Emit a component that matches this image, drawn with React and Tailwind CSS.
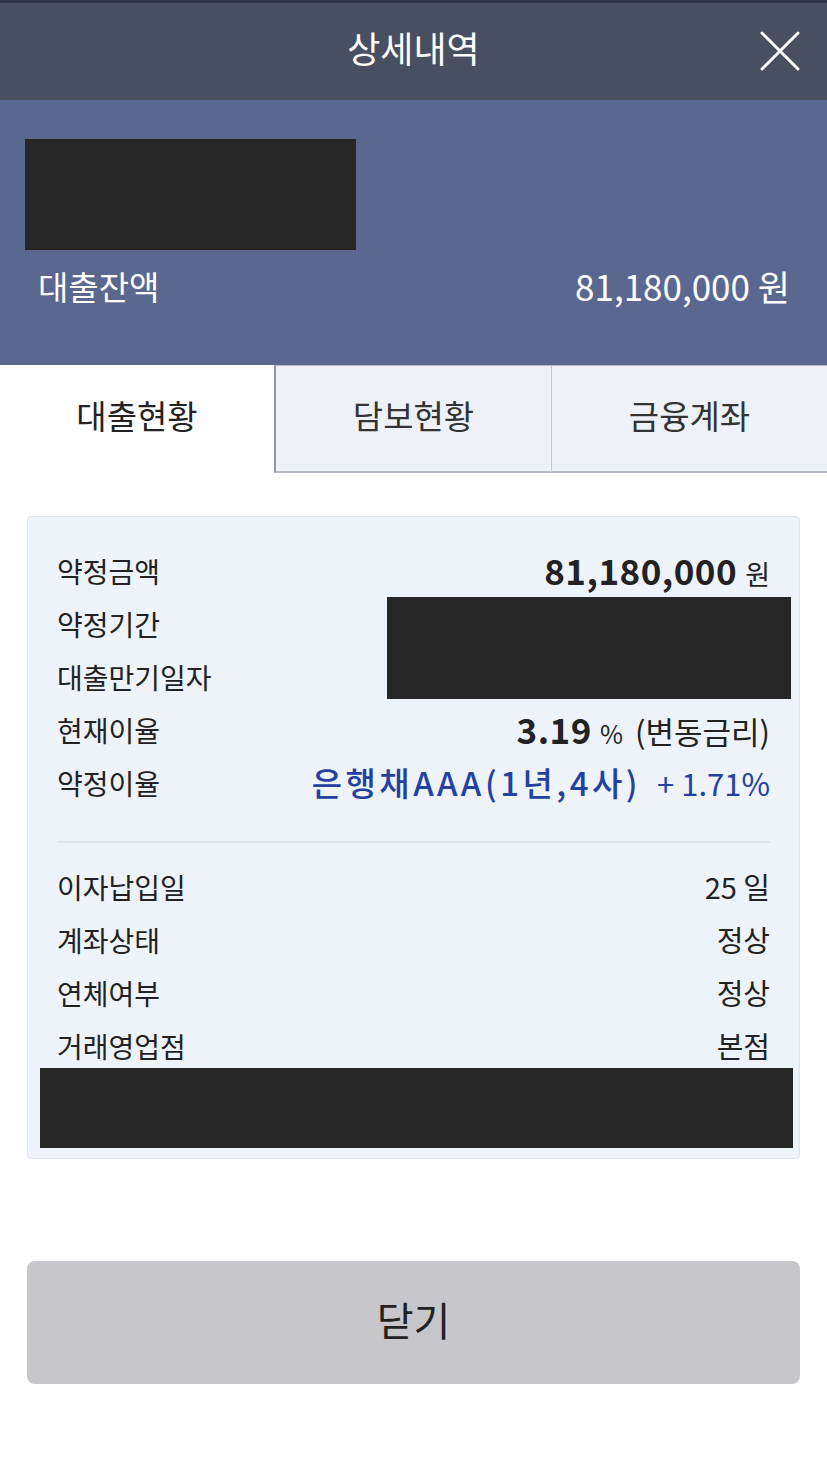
const FONT = { fontFamily: '"Noto Sans CJK KR", "Noto Sans", sans-serif' };

const TOP_ROWS = [
  { label: '약정금액', value: 'amount' },
  { label: '약정기간', value: null },
  { label: '대출만기일자', value: null },
  { label: '현재이율', value: 'rate' },
  { label: '약정이율', value: 'contract' },
];

const BOTTOM_ROWS = [
  { label: '이자납입일', value: '25 일' },
  { label: '계좌상태', value: '정상' },
  { label: '연체여부', value: '정상' },
  { label: '거래영업점', value: '본점' },
];

const TABS = ['대출현황', '담보현황', '금융계좌'];

const renderValue = (kind) => {
  if (kind === 'amount') {
    return (
      <span className="flex items-baseline gap-2">
        <span className="text-[35px] font-bold tracking-[0.5px]">81,180,000</span>
        <span className="text-[27px]">원</span>
      </span>
    );
  }
  if (kind === 'rate') {
    return (
      <span className="flex items-baseline gap-2">
        <span className="text-[35px] font-bold tracking-[0.5px]">3.19</span>
        <span className="text-[25px]">%</span>
        <span className="text-[31px] ml-1">(변동금리)</span>
      </span>
    );
  }
  if (kind === 'contract') {
    return (
      <span className="flex items-baseline gap-4 text-[#2441a0]">
        <span className="text-[33px] font-medium tracking-[3.5px]">은행채AAA(1년,4사)</span>
        <span className="text-[31px]">+ 1.71%</span>
      </span>
    );
  }
  return null;
};

export default function App() {
  return (
    <div className="w-[827px] min-h-[1483px] bg-white text-[#222]" style={FONT}>
      {/* Title bar */}
      <div className="h-[100px] bg-[#474f61] border-t-[3px] border-[#2f3546] flex items-center justify-center relative">
        <span className="text-white text-[36px] mt-[-10px]">상세내역</span>
        <button className="absolute right-[25px] top-[26px] w-[44px] h-[44px] flex items-center justify-center">
          <svg width="42" height="42" viewBox="0 0 42 42" fill="none" stroke="white" strokeWidth="3" strokeLinecap="round">
            <path d="M3 3 L39 39 M39 3 L3 39" />
          </svg>
        </button>
      </div>

      {/* Balance */}
      <div className="h-[265px] bg-[#5a6890] pt-[39px] px-[25px]">
        <div className="w-[331px] h-[111px] bg-[#262626]" />
        <div className="flex items-center justify-between text-white mt-[10px] pl-[13px] pr-[12px]">
          <span className="text-[33px]">대출잔액</span>
          <span className="text-[35px]">81,180,000 원</span>
        </div>
      </div>

      {/* Tabs */}
      <div className="flex h-[108px]">
        {TABS.map((tab, i) => (
          <div
            key={tab}
            className={`flex items-center justify-center text-[33px] ${
              i === 0
                ? 'w-[274px] bg-white text-[#222]'
                : `flex-1 bg-[#eef2f8] text-[#333] border-t border-b-2 border-[#b5bcc6] ${i === 1 ? 'border-l-2 border-l-[#8f97a2]' : 'border-l border-l-[#c3c9d1]'}`
            }`}
          >
            <span className="mt-[-6px]">{tab}</span>
          </div>
        ))}
      </div>

      {/* Detail card */}
      <div className="mx-[27px] mt-[43px] bg-[#eef2f9] border border-[#dde3ea] rounded-[4px] px-[29px] pt-[27px] pb-[10px]">
        <div className="relative">
          {TOP_ROWS.map(r => (
            <div key={r.label} className="h-[53px] flex items-center justify-between">
              <span className="text-[28px]">{r.label}</span>
              {renderValue(r.value)}
            </div>
          ))}
          <div className="absolute left-[330px] right-[-21px] top-[53px] h-[102px] bg-[#262626]" />
        </div>

        <div className="h-[2px] bg-[#dfe4ea] mt-[32px] mb-[17px]" />

        {BOTTOM_ROWS.map(r => (
          <div key={r.label} className="h-[53px] flex items-center justify-between">
            <span className="text-[28px]">{r.label}</span>
            <span className="text-[29px]">{r.value}</span>
          </div>
        ))}
        <div className="ml-[-17px] mr-[-23px] mt-[-4px] h-[80px] bg-[#262626]" />
      </div>

      {/* Close button */}
      <div className="px-[27px] mt-[102px]">
        <button className="w-full h-[123px] rounded-[8px] bg-[#c6c6cb] flex items-center justify-center">
          <span className="text-[40px] text-[#222] mt-[-8px]">닫기</span>
        </button>
      </div>
    </div>
  );
}
